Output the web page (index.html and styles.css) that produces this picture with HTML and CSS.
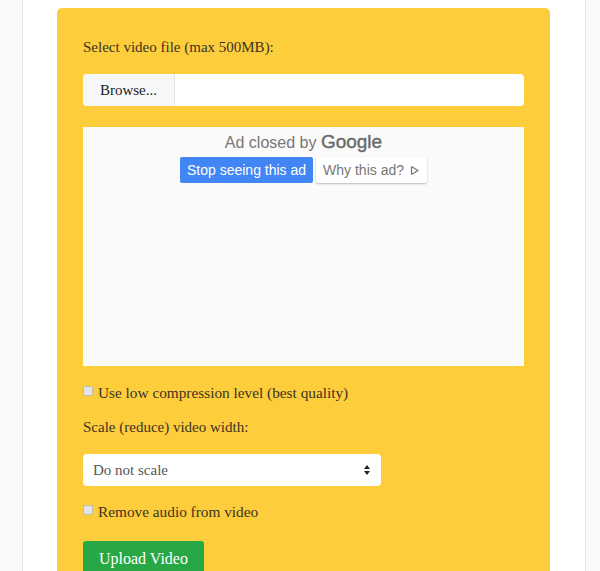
FILE: index.html
```html
<!DOCTYPE html>
<html lang="en">
    <head>
        <meta charset="UTF-8">
        <meta name="viewport" content="width=device-width, initial-scale=1.0">
        <title>Compress Video</title>
        <link rel="stylesheet" href="styles.css">
    </head>

    <body>
        <div class="page">
            <form class="upload-card">
                <label class="field-label" for="videoFile">Select video file (max 500MB):</label>
                <div class="file-input">
                    <span class="browse">Browse...</span>
                    <span class="file-name"></span>
                </div>

                <!-- Ad slot -->
                <div class="ad-box">
                    <div class="ad-closed">Ad closed by <span class="google">Google</span></div>
                    <div class="ad-buttons">
                        <button type="button" class="ad-stop">Stop seeing this ad</button>
                        <button type="button" class="ad-why">Why this ad?
                            <svg width="11" height="11" viewBox="0 0 11 11"><path d="M2.5 1.5v8M2.5 1.5l6.5 4-6.5 4" fill="none" stroke="#777" stroke-width="1.2" stroke-linejoin="round"/></svg>
                        </button>
                    </div>
                </div>

                <label class="check-row"><span class="check"></span>Use low compression level (best quality)</label>

                <label class="field-label scale-label" for="scale">Scale (reduce) video width:</label>
                <div class="select-box">
                    <span>Do not scale</span>
                    <svg width="8" height="12" viewBox="0 0 8 12"><path d="M4 1L7 5H1z M4 11L1 7h6z" fill="#222"/></svg>
                </div>

                <label class="check-row audio-row"><span class="check"></span>Remove audio from video</label>

                <button type="button" class="upload-button">Upload Video</button>
            </form>
        </div>
    </body>
</html>
```

FILE: styles.css
```css
* {
    box-sizing: border-box;
    margin: 0;
    padding: 0;
}
body {
    background-color: #f8f9fa;
    font-family: "Liberation Serif", serif;
    font-size: 15px;
    color: #3b3324;
    overflow: hidden;
}
.page {
    margin-left: 22px;
    width: 564px;
    height: 571px;
    overflow: hidden;
    background-color: #fff;
    border-left: 1px solid #e6e6e6;
    border-right: 1px solid #e6e6e6;
    padding: 8px 35px 0 34px;
}
.upload-card {
    background-color: #fecd3c;
    border-radius: 5px 5px 0 0;
    padding: 28px 26px 0 26px;
    height: 563px;
}
.field-label {
    display: block;
    line-height: 22px;
}
.file-input {
    display: flex;
    margin-top: 16px;
    height: 32px;
    background-color: #fff;
    border-radius: 4px;
    overflow: hidden;
}
.browse {
    width: 92px;
    background-color: #f6f7f8;
    border-right: 1px solid #e3e3e3;
    display: flex;
    align-items: center;
    justify-content: center;
    color: #222;
}
.file-name {
    flex: 1;
}
.ad-box {
    margin-top: 21px;
    height: 239px;
    background-color: #fafafa;
    font-family: "Liberation Sans", Arial, sans-serif;
    display: flex;
    flex-direction: column;
    align-items: center;
    padding-top: 5px;
}
.ad-closed {
    color: #777;
    font-size: 16px;
    line-height: 20px;
}
.google {
    font-size: 19px;
    font-weight: normal;
    color: #6a6a6a;
    -webkit-text-stroke: 0.4px #6a6a6a;
}
.ad-buttons {
    display: flex;
    gap: 3px;
    margin-top: 4px;
}
.ad-buttons button {
    height: 26px;
    border: none;
    border-radius: 2px;
    font-family: "Liberation Sans", Arial, sans-serif;
    font-size: 14px;
    padding: 0 7px;
}
.ad-stop {
    background-color: #4285f4;
    color: #fff;
}
.ad-why {
    background-color: #fff;
    color: #777;
    box-shadow: 0 1px 2px rgba(0, 0, 0, 0.25);
    display: flex;
    align-items: center;
    gap: 5px;
}
.check-row {
    display: flex;
    align-items: center;
    margin-top: 16px;
    line-height: 22px;
    font-size: 15.3px;
}
.check {
    width: 10px;
    height: 10px;
    margin-right: 5px;
    margin-top: -4px;
    background-color: #e4e4e4;
    border: 1px solid #bbb;
    border-radius: 2px;
}
.scale-label {
    margin-top: 12px;
}
.select-box {
    margin-top: 16px;
    width: 298px;
    height: 32px;
    background-color: #fff;
    border-radius: 4px;
    display: flex;
    align-items: center;
    justify-content: space-between;
    padding: 0 10px;
    color: #555;
}
.audio-row {
    margin-top: 15px;
}
.upload-button {
    margin-top: 18px;
    background-color: #28a745;
    color: #fff;
    border: none;
    border-radius: 3px;
    font-family: "Liberation Serif", serif;
    font-size: 16px;
    padding: 0 16px;
    height: 36px;
}
```
